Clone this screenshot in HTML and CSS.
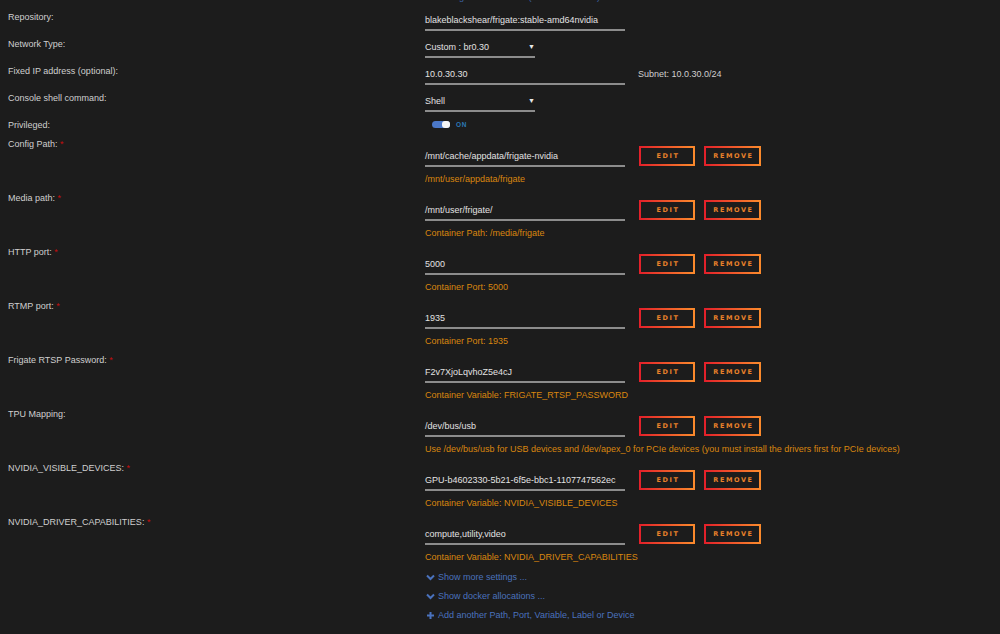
FILE: index.html
```html
<!DOCTYPE html>
<html lang="en">
<head>
    <meta charset="UTF-8">
    <title>Update Container - frigate</title>
    <link rel="stylesheet" href="styles.css">
</head>
<body>
    <div class="form">
        <div class="row cut">
            <div class="label"></div>
            <div class="note">searching for Coral driver (thanks to ich777)</div>
        </div>

        <div class="row short">
            <div class="label">Repository:</div>
            <div class="field wide">blakeblackshear/frigate:stable-amd64nvidia</div>
        </div>
        <div class="row short">
            <div class="label">Network Type:</div>
            <div class="field select">Custom : br0.30<span class="arrow">&#9660;</span></div>
        </div>
        <div class="row short">
            <div class="label">Fixed IP address (optional):</div>
            <div class="field wide">10.0.30.30</div>
            <div class="subnet">Subnet: 10.0.30.0/24</div>
        </div>
        <div class="row short">
            <div class="label">Console shell command:</div>
            <div class="field select">Shell<span class="arrow">&#9660;</span></div>
        </div>
        <div class="row toggle-row">
            <div class="label">Privileged:</div>
            <div class="switch"><span class="knob"></span></div>
            <span class="on">ON</span>
        </div>

        <div class="row config">
            <div class="label">Config Path: <span class="req">*</span></div>
            <div class="col">
                <div class="field wide">/mnt/cache/appdata/frigate-nvidia</div>
                <div class="help">/mnt/user/appdata/frigate</div>
            </div>
            <div class="buttons"><button class="btn edit">EDIT</button><button class="btn">REMOVE</button></div>
        </div>
        <div class="row config">
            <div class="label">Media path: <span class="req">*</span></div>
            <div class="col">
                <div class="field wide">/mnt/user/frigate/</div>
                <div class="help">Container Path: /media/frigate</div>
            </div>
            <div class="buttons"><button class="btn edit">EDIT</button><button class="btn">REMOVE</button></div>
        </div>
        <div class="row config">
            <div class="label">HTTP port: <span class="req">*</span></div>
            <div class="col">
                <div class="field wide">5000</div>
                <div class="help">Container Port: 5000</div>
            </div>
            <div class="buttons"><button class="btn edit">EDIT</button><button class="btn">REMOVE</button></div>
        </div>
        <div class="row config">
            <div class="label">RTMP port: <span class="req">*</span></div>
            <div class="col">
                <div class="field wide">1935</div>
                <div class="help">Container Port: 1935</div>
            </div>
            <div class="buttons"><button class="btn edit">EDIT</button><button class="btn">REMOVE</button></div>
        </div>
        <div class="row config">
            <div class="label">Frigate RTSP Password: <span class="req">*</span></div>
            <div class="col">
                <div class="field wide">F2v7XjoLqvhoZ5e4cJ</div>
                <div class="help">Container Variable: FRIGATE_RTSP_PASSWORD</div>
            </div>
            <div class="buttons"><button class="btn edit">EDIT</button><button class="btn">REMOVE</button></div>
        </div>
        <div class="row config">
            <div class="label">TPU Mapping:</div>
            <div class="col">
                <div class="field wide">/dev/bus/usb</div>
                <div class="help">Use /dev/bus/usb for USB devices and /dev/apex_0 for PCIe devices (you must install the drivers first for PCIe devices)</div>
            </div>
            <div class="buttons"><button class="btn edit">EDIT</button><button class="btn">REMOVE</button></div>
        </div>
        <div class="row config">
            <div class="label">NVIDIA_VISIBLE_DEVICES: <span class="req">*</span></div>
            <div class="col">
                <div class="field wide">GPU-b4602330-5b21-6f5e-bbc1-1107747562ec</div>
                <div class="help">Container Variable: NVIDIA_VISIBLE_DEVICES</div>
            </div>
            <div class="buttons"><button class="btn edit">EDIT</button><button class="btn">REMOVE</button></div>
        </div>
        <div class="row config">
            <div class="label">NVIDIA_DRIVER_CAPABILITIES: <span class="req">*</span></div>
            <div class="col">
                <div class="field wide">compute,utility,video</div>
                <div class="help">Container Variable: NVIDIA_DRIVER_CAPABILITIES</div>
            </div>
            <div class="buttons"><button class="btn edit">EDIT</button><button class="btn">REMOVE</button></div>
        </div>

        <div class="links">
            <a class="link">
                <svg width="9" height="7" viewBox="0 0 9 7"><path d="M1 1.5 L4.5 5 L8 1.5" fill="none" stroke="currentColor" stroke-width="2"/></svg>
                Show more settings ...
            </a>
            <a class="link">
                <svg width="9" height="7" viewBox="0 0 9 7"><path d="M1 1.5 L4.5 5 L8 1.5" fill="none" stroke="currentColor" stroke-width="2"/></svg>
                Show docker allocations ...
            </a>
            <a class="link">
                <svg width="9" height="9" viewBox="0 0 9 9"><path d="M4.5 1 V8 M1 4.5 H8" fill="none" stroke="currentColor" stroke-width="2"/></svg>
                Add another Path, Port, Variable, Label or Device
            </a>
        </div>
    </div>
</body>
</html>
```

FILE: styles.css
```css
body {
    margin: 0;
    background: #1c1c1c;
    color: #d4d4d4;
    font-family: "Liberation Sans", Arial, sans-serif;
    font-size: 9px;
    line-height: 12px;
    height: 634px;
    overflow: hidden;
}
.form {
    padding-left: 8px;
}
.row {
    display: flex;
    align-items: flex-start;
}
.label {
    width: 417px;
    flex: none;
    color: #cfcfcf;
}
.req {
    color: #c40d0d;
}
.cut {
    height: 11px;
}
.note {
    margin-top: -9px;
    color: #3f64a8;
}
.short {
    height: 27px;
}
.field {
    color: #e2e2e2;
    padding: 3px 0;
    border-bottom: 2px solid #8c8c8c;
    white-space: nowrap;
}
.wide {
    width: 200px;
}
.select {
    width: 110px;
    display: flex;
    justify-content: space-between;
}
.arrow {
    font-size: 7px;
    color: #e8e8e8;
}
.subnet {
    margin-left: 13px;
    padding-top: 3px;
    color: #cfcfcf;
}
.toggle-row {
    height: 19px;
}
.switch {
    margin: 2px 0 0 7px;
    width: 18px;
    height: 7px;
    border-radius: 4px;
    background: #4b78c8;
    position: relative;
}
.knob {
    position: absolute;
    right: 0;
    top: 0;
    width: 8px;
    height: 7px;
    border-radius: 3px;
    background: #f4f4f4;
}
.on {
    margin-left: 6px;
    color: #2b79b8;
    font-size: 6.5px;
    font-weight: bold;
    letter-spacing: 0.6px;
}
.config {
    height: 54px;
}
.col {
    padding-top: 9px;
    width: 214px;
    flex: none;
}
.help {
    margin-top: 6px;
    color: #d9860f;
    white-space: nowrap;
}
.buttons {
    padding-top: 8px;
    display: flex;
    gap: 9px;
}
.btn {
    height: 20px;
    width: 56px;
    box-sizing: border-box;
    background: transparent;
    border: 2px solid;
    border-image: linear-gradient(90deg, #e3202a, #fb8a2c) 1;
    color: #e8812a;
    font-family: "DejaVu Sans", sans-serif;
    font-size: 6.5px;
    font-weight: bold;
    letter-spacing: 1.6px;
    padding: 0 0 0 2px;
}
.btn + .btn {
    width: 57px;
}
.links {
    padding-left: 417px;
    display: flex;
    flex-direction: column;
    gap: 7px;
    padding-top: 1px;
}
.link {
    color: #4a72bd;
    display: flex;
    align-items: center;
    gap: 3px;
}
.link svg {
    flex: none;
    margin-left: 1px;
}
```
